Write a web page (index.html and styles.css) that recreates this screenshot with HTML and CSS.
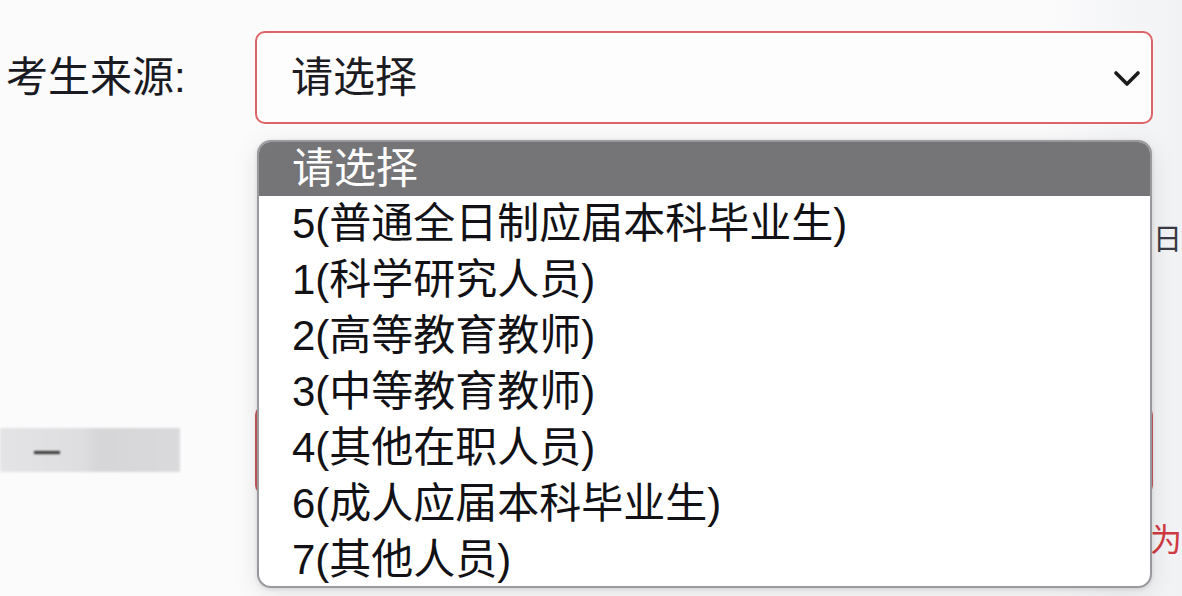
FILE: index.html
```html
<!DOCTYPE html>
<html lang="zh-CN">
<head>
<meta charset="utf-8">
<title>考生来源</title>
<link rel="stylesheet" href="styles.css">
</head>
<body>
<div class="page">
  <div class="form-row first">
    <label class="label">考生来源:</label>
    <div class="select">
      <span class="select-value">请选择</span>
      <svg class="chevron" width="28" height="18" viewBox="0 0 28 18"><path d="M3 3 L14 14 L25 3" fill="none" stroke="#1b1b1b" stroke-width="3.6" stroke-linecap="round" stroke-linejoin="round"/></svg>
    </div>
  </div>

  <div class="form-row note-row">
    <span class="spacer"></span>
    <span class="note">日</span>
  </div>

  <div class="form-row third">
    <div class="blurred"><span class="dash"></span></div>
    <div class="input"></div>
  </div>

  <div class="form-row hint-row">
    <span class="spacer"></span>
    <span class="hint">为</span>
  </div>

  <ul class="dropdown">
    <li class="opt active">请选择</li>
    <li class="opt">5(普通全日制应届本科毕业生)</li>
    <li class="opt">1(科学研究人员)</li>
    <li class="opt">2(高等教育教师)</li>
    <li class="opt">3(中等教育教师)</li>
    <li class="opt">4(其他在职人员)</li>
    <li class="opt">6(成人应届本科毕业生)</li>
    <li class="opt">7(其他人员)</li>
  </ul>
</div>
</body>
</html>
```

FILE: styles.css
```css
html, body {
  margin: 0;
  padding: 0;
  width: 1182px;
  height: 596px;
  overflow: hidden;
}

body {
  background: linear-gradient(90deg, #fbfbfc 0%, #fbfbfc 88%, #f1f2f4 100%);
  font-family: "Liberation Sans", "Noto Sans CJK SC", sans-serif;
  color: #1a1a1f;
}

.page {
  position: relative;
  height: 596px;
  padding: 31px 0 0 8px;
  box-sizing: border-box;
}

.form-row {
  display: grid;
  grid-template-columns: 247px 898px;
  align-items: center;
}

.label {
  font-size: 42px;
  line-height: 1;
  color: #1a1a22;
  margin-left: -2px;
}

.select {
  height: 93px;
  box-sizing: border-box;
  border: 2px solid #dc6466;
  border-radius: 10px;
  background: #fdfdfe;
  display: flex;
  align-items: center;
  justify-content: space-between;
  padding: 0 10px 0 34px;
}

.select-value {
  font-size: 42px;
  line-height: 1;
  color: #1c1c22;
}

.chevron {
  display: block;
  margin-top: 2px;
}

.note-row {
  margin-top: 96px;
  height: 40px;
  grid-template-columns: 1145px 29px;
}

.note {
  font-size: 29px;
  line-height: 1;
  color: #3a3a44;
  white-space: nowrap;
}

.third {
  margin-top: 145px;
  margin-left: -8px;
  grid-template-columns: 255px 898px;
}

.blurred {
  width: 180px;
  height: 44px;
  background: linear-gradient(90deg, #e4e4e6 0%, #dedee0 45%, #d6d6d8 55%, #dadadc 100%);
  filter: blur(1px);
  position: relative;
}

.dash {
  position: absolute;
  left: 34px;
  top: 23px;
  width: 26px;
  height: 3px;
  background: #333;
}

.input {
  height: 90px;
  box-sizing: border-box;
  border: 2px solid #c95a5e;
  border-radius: 10px;
  background: #fff;
}

.hint-row {
  margin-top: 25px;
  height: 40px;
  grid-template-columns: 1142px 32px;
}

.hint {
  font-size: 32px;
  line-height: 1;
  color: #d03a42;
  white-space: nowrap;
}

.dropdown {
  position: absolute;
  left: 257px;
  top: 140px;
  width: 895px;
  height: 448px;
  margin: 0;
  padding: 0;
  list-style: none;
  box-sizing: border-box;
  border: 2px solid #9a9a9e;
  border-radius: 14px;
  background: #ffffff;
  overflow: hidden;
  box-shadow: 0 6px 26px rgba(0, 0, 0, 0.10), 0 1px 4px rgba(0, 0, 0, 0.12);
}

.opt {
  height: 56px;
  display: flex;
  align-items: center;
  padding-left: 33px;
  font-size: 42px;
  line-height: 1;
  color: #111116;
  white-space: nowrap;
}

.opt.active {
  height: 54px;
  background: #757577;
  color: #ffffff;
}
```
